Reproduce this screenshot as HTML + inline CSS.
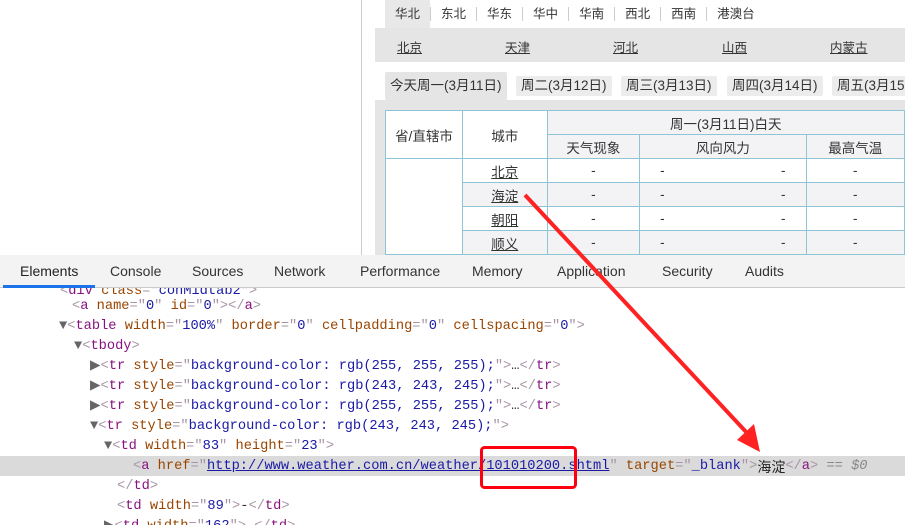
<!DOCTYPE html>
<html><head><meta charset="utf-8"><style>
*{margin:0;padding:0;box-sizing:border-box}
body{width:905px;height:525px;overflow:hidden;background:#fff;position:relative;font-family:"Liberation Sans","Noto Sans CJK SC",sans-serif;font-size:13px;color:#333}
.abs{position:absolute}
.vl{left:361px;top:0;width:1px;height:255px;background:#ccc}
.rtabs{left:385px;top:0;height:28px;display:flex;align-items:center;font-size:12.5px}
.rtabs span{padding:0 10px;border-left:1px solid #ccc;line-height:14px}
.rtabs span:first-child{border:none;background:#e8e8e8;line-height:28px;padding:0 10px}
.pbar{left:375px;top:28px;width:530px;height:34px;background:#e5e5e5}
.pbar span{position:absolute;top:9px;text-decoration:underline;font-size:12.5px}
.dtabs{left:385px;top:72px;height:28px}
.dtabs span{position:absolute;top:4px;height:20px;line-height:20px;background:#ececec;padding:0 5px;font-size:13.5px;border-radius:2px;white-space:nowrap}
.tarea{left:375px;top:100px;width:530px;height:155px;background:#e5e5e5}
table{position:absolute;left:385px;top:110px;border-collapse:collapse;background:#fff;table-layout:fixed}
td{border:1px solid #8fc4d6;text-align:center;height:24px;font-size:13.5px;padding:0}
td.u{text-decoration:underline}
tr.g td{background:#f3f3f5}
.dev{left:0;top:255px;width:905px;height:33px;background:#f3f3f3;border-bottom:1px solid #ccc}
.dev span{position:absolute;top:8px;font-size:14px;color:#333}
.ul{left:3px;top:285px;width:92px;height:3px;background:#1a73e8}
.code{left:0;top:288px;width:905px;font-family:"Liberation Mono",monospace;font-size:13.7px}
.ln{position:absolute;height:20px;line-height:20px;white-space:pre;left:0;width:905px;overflow:hidden}
.ln span{line-height:20px;vertical-align:top}
.t{color:#881280}.a{color:#994500}.v{color:#1a1aa6}.b{color:#a894a6}
.hl{background:#dadada}
</style></head><body>
<div class="abs vl"></div>
<div class="abs rtabs"><span>华北</span><span>东北</span><span>华东</span><span>华中</span><span>华南</span><span>西北</span><span>西南</span><span>港澳台</span></div>
<div class="abs pbar"><span style="left:22px">北京</span><span style="left:130px">天津</span><span style="left:238px">河北</span><span style="left:347px">山西</span><span style="left:455px">内蒙古</span></div>
<div class="abs dtabs" style="width:520px"><span style="left:0;top:0;height:28px;line-height:28px;background:#e5e5e5">今天周一(3月11日)</span><span style="left:131px">周二(3月12日)</span><span style="left:236px">周三(3月13日)</span><span style="left:342px">周四(3月14日)</span><span style="left:447px">周五(3月15日)</span></div>
<div class="abs tarea"></div>
<table>
<colgroup><col style="width:78px"><col style="width:86px"><col style="width:94px"><col style="width:169px"><col style="width:100px"></colgroup>
<tr><td rowspan="2">省/直辖市</td><td rowspan="2">城市</td><td colspan="3" style="background:#f3f3f5">周一(3月11日)白天</td></tr>
<tr class="g"><td>天气现象</td><td>风向风力</td><td>最高气温</td></tr>
<tr><td rowspan="4"></td><td class="u">北京</td><td>-</td><td><span style="float:left;padding-left:20px">-</span><span style="float:right;padding-right:20px">-</span></td><td>-</td></tr>
<tr class="g"><td class="u">海淀</td><td>-</td><td><span style="float:left;padding-left:20px">-</span><span style="float:right;padding-right:20px">-</span></td><td>-</td></tr>
<tr><td class="u">朝阳</td><td>-</td><td><span style="float:left;padding-left:20px">-</span><span style="float:right;padding-right:20px">-</span></td><td>-</td></tr>
<tr class="g"><td class="u">顺义</td><td>-</td><td><span style="float:left;padding-left:20px">-</span><span style="float:right;padding-right:20px">-</span></td><td>-</td></tr>
</table>
<div class="abs dev"><span style="left:20px;color:#222">Elements</span><span style="left:110px">Console</span><span style="left:192px">Sources</span><span style="left:274px">Network</span><span style="left:360px">Performance</span><span style="left:472px">Memory</span><span style="left:557px">Application</span><span style="left:662px">Security</span><span style="left:745px">Audits</span></div>
<div class="abs ul"></div>
<div class="abs code" style="height:237px;overflow:hidden">
<div class="ln" style="top:-6px;padding-left:60px"><span class="b">&lt;</span><span class="t">div</span> <span class="a">class</span><span class="b">="</span><span class="v">conMidtab2</span><span class="b">"&gt;</span></div>
<div class="ln" style="top:9px;padding-left:72px"><span class="b">&lt;</span><span class="t">a</span> <span class="a">name</span><span class="b">="</span><span class="v">0</span><span class="b">"</span> <span class="a">id</span><span class="b">="</span><span class="v">0</span><span class="b">"&gt;&lt;/</span><span class="t">a</span><span class="b">&gt;</span></div>
<div class="ln" style="top:29px;padding-left:59px"><span style="color:#666">▼</span><span class="b">&lt;</span><span class="t">table</span> <span class="a">width</span><span class="b">="</span><span class="v">100%</span><span class="b">"</span> <span class="a">border</span><span class="b">="</span><span class="v">0</span><span class="b">"</span> <span class="a">cellpadding</span><span class="b">="</span><span class="v">0</span><span class="b">"</span> <span class="a">cellspacing</span><span class="b">="</span><span class="v">0</span><span class="b">"&gt;</span></div>
<div class="ln" style="top:49px;padding-left:74px"><span style="color:#666">▼</span><span class="b">&lt;</span><span class="t">tbody</span><span class="b">&gt;</span></div>
<div class="ln" style="top:69px;padding-left:90px"><span style="color:#666">▶</span><span class="b">&lt;</span><span class="t">tr</span> <span class="a">style</span><span class="b">="</span><span class="v">background-color: rgb(255, 255, 255);</span><span class="b">"&gt;</span>…<span class="b">&lt;/</span><span class="t">tr</span><span class="b">&gt;</span></div>
<div class="ln" style="top:89px;padding-left:90px"><span style="color:#666">▶</span><span class="b">&lt;</span><span class="t">tr</span> <span class="a">style</span><span class="b">="</span><span class="v">background-color: rgb(243, 243, 245);</span><span class="b">"&gt;</span>…<span class="b">&lt;/</span><span class="t">tr</span><span class="b">&gt;</span></div>
<div class="ln" style="top:109px;padding-left:90px"><span style="color:#666">▶</span><span class="b">&lt;</span><span class="t">tr</span> <span class="a">style</span><span class="b">="</span><span class="v">background-color: rgb(255, 255, 255);</span><span class="b">"&gt;</span>…<span class="b">&lt;/</span><span class="t">tr</span><span class="b">&gt;</span></div>
<div class="ln" style="top:129px;padding-left:90px"><span style="color:#666">▼</span><span class="b">&lt;</span><span class="t">tr</span> <span class="a">style</span><span class="b">="</span><span class="v">background-color: rgb(243, 243, 245);</span><span class="b">"&gt;</span></div>
<div class="ln" style="top:149px;padding-left:104px"><span style="color:#666">▼</span><span class="b">&lt;</span><span class="t">td</span> <span class="a">width</span><span class="b">="</span><span class="v">83</span><span class="b">"</span> <span class="a">height</span><span class="b">="</span><span class="v">23</span><span class="b">"&gt;</span></div>
<div class="ln hl" style="top:168px;padding-left:133px;padding-top:1px"><span class="b">&lt;</span><span class="t">a</span> <span class="a">href</span><span class="b">="</span><span class="v" style="text-decoration:underline">http://www.weather.com.cn/weather/101010200.shtml</span><span class="b">"</span> <span class="a">target</span><span class="b">="</span><span class="v">_blank</span><span class="b">"&gt;</span><span style="color:#222;font-family:'Noto Sans CJK SC',sans-serif;font-size:14px">海淀</span><span class="b">&lt;/</span><span class="t">a</span><span class="b">&gt;</span> <span style="color:#888;font-style:italic">== $0</span></div>
<div class="ln" style="top:189px;padding-left:117px"><span class="b">&lt;/</span><span class="t">td</span><span class="b">&gt;</span></div>
<div class="ln" style="top:209px;padding-left:117px"><span class="b">&lt;</span><span class="t">td</span> <span class="a">width</span><span class="b">="</span><span class="v">89</span><span class="b">"&gt;</span>-<span class="b">&lt;/</span><span class="t">td</span><span class="b">&gt;</span></div>
<div class="ln" style="top:229px;padding-left:104px"><span style="color:#666">▶</span><span class="b">&lt;</span><span class="t">td</span> <span class="a">width</span><span class="b">="</span><span class="v">162</span><span class="b">"&gt;</span>…<span class="b">&lt;/</span><span class="t">td</span><span class="b">&gt;</span></div>
</div>
<svg class="abs" style="left:0;top:0" width="905" height="525">
<line x1="525" y1="195" x2="748" y2="434" stroke="#f22" stroke-width="4"/>
<polygon points="760,452 737,440 754,424" fill="#f22"/>
<rect x="481.5" y="447.5" width="94" height="40" rx="3" fill="none" stroke="#f01" stroke-width="3"/>
</svg>
</body></html>
